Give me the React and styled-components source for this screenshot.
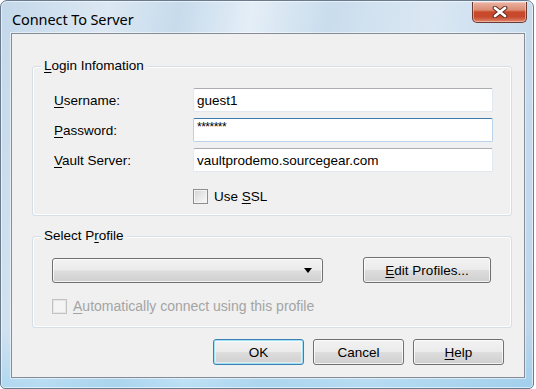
import React from "react";
import styled, { createGlobalStyle, css } from "styled-components";

const GlobalStyle = createGlobalStyle`
  body {
    margin: 0;
    background: #ffffff;
  }
`;

const dialogFont = `"Liberation Sans", Arial, sans-serif`;

const Window = styled.div`
  box-sizing: border-box;
  width: 534px;
  height: 389px;
  display: flex;
  flex-direction: column;
  padding: 0 8px 10px 10px;
  border: 1px solid #6a7b8e;
  border-radius: 7px 7px 5px 5px;
  background:
    linear-gradient(to bottom, rgba(255, 255, 255, 0) 85%, rgba(120, 200, 240, 0.4) 100%),
    linear-gradient(
      100deg,
      #c3d8ea 0%,
      #dce8f3 18%,
      #c7dbec 30%,
      #e4eef7 42%,
      #cadded 55%,
      #dae7f3 72%,
      #c9dcee 88%,
      #bcd4ea 100%
    );
  box-shadow: inset 0 0 0 1px rgba(255, 255, 255, 0.55);
  font-family: ${dialogFont};
`;

const TitleBar = styled.div`
  height: 32px;
  display: flex;
  justify-content: space-between;
  align-items: flex-start;
`;

const Title = styled.div`
  margin-top: 8px;
  padding-left: 1px;
  font-family: "Noto Sans", "Open Sans", sans-serif;
  font-size: 14.5px;
  color: #000;
  letter-spacing: -0.1px;
`;

const CloseButton = styled.div`
  box-sizing: border-box;
  width: 55px;
  height: 21px;
  margin-top: 1px;
  margin-right: -2px;
  display: flex;
  align-items: center;
  justify-content: center;
  border: 1px solid #6b3a30;
  border-top: none;
  border-radius: 0 0 5px 5px;
  background: linear-gradient(
    to bottom,
    #eab4a4 0%,
    #dc8c74 40%,
    #c9482a 50%,
    #c64a2e 75%,
    #e0876c 100%
  );
  box-shadow: inset 0 0 0 1px rgba(255, 220, 210, 0.5);
`;

const Client = styled.div`
  flex: 1;
  display: flex;
  flex-direction: column;
  padding: 32px 12px 0 20px;
  border: 1px solid #858c95;
  background: #f0f0f0;
  box-shadow: 0 0 0 1px rgba(255, 255, 255, 0.5);
`;

const GroupBox = styled.div`
  position: relative;
  box-sizing: border-box;
  border: 1px solid #d5dfe5;
  border-radius: 3px;
  box-shadow: inset 0 0 0 1px #fdfdfd;
  ${(p) => p.$pad && css`padding: ${p.$pad};`}
  ${(p) => p.$mt && css`margin-top: ${p.$mt};`}
`;

const GroupTitle = styled.span`
  position: absolute;
  left: 8px;
  top: -9px;
  padding: 0 3px;
  background: #f0f0f0;
  font-size: 13.5px;
  line-height: 16px;
  color: #000;
`;

const Key = styled.span`
  text-decoration: underline;
  text-underline-offset: 2px;
`;

const FormGrid = styled.div`
  display: grid;
  grid-template-columns: 139px 300px;
  grid-auto-rows: 24px;
  row-gap: 6px;
  align-items: center;
`;

const Label = styled.label`
  font-size: 13.5px;
  color: #000;
`;

const TextBox = styled.input`
  box-sizing: border-box;
  width: 100%;
  height: 24px;
  margin: 0;
  padding: 0 3px;
  font-family: ${dialogFont};
  font-size: 13.5px;
  color: #000;
  background: #fff;
  border: 1px solid #e2e8ee;
  border-top-color: #abadb3;
  border-radius: 2px;
  outline: none;
  ${(p) =>
    p.$focused &&
    css`
      border-color: #b7d2ea;
      border-top-color: #3d7bad;
    `}
  ${(p) =>
    p.$secret &&
    css`
      padding-bottom: 6px;
      font-size: 12px;
      letter-spacing: -0.5px;
    `}
`;

const CheckRow = styled.div`
  display: flex;
  align-items: center;
  gap: 6px;
  ${(p) => p.$mt && css`margin-top: ${p.$mt};`}
  ${(p) => p.$indent && css`padding-left: ${p.$indent};`}
  font-size: ${(p) => (p.$disabled ? "14px" : "13.5px")};
  color: ${(p) => (p.$disabled ? "#a4a4a4" : "#000")};
`;

const CheckBox = styled.span`
  box-sizing: border-box;
  width: 15px;
  height: 15px;
  border: 1px solid ${(p) => (p.$disabled ? "#c2c2c2" : "#8e8f8f")};
  background: ${(p) =>
    p.$disabled
      ? "#f4f4f4"
      : "linear-gradient(135deg, #d2d2d2 0%, #e8e8e8 50%, #fafafa 100%)"};
  box-shadow: inset 0 0 0 1px ${(p) => (p.$disabled ? "#e6e6e6" : "#f4f4f4")};
  flex-shrink: 0;
`;

const ProfileRow = styled.div`
  display: flex;
  align-items: center;
`;

const ComboBox = styled.div`
  box-sizing: border-box;
  width: 271px;
  height: 25px;
  display: flex;
  align-items: center;
  justify-content: flex-end;
  padding-right: 10px;
  border: 1px solid #707070;
  border-radius: 3px;
  background: linear-gradient(to bottom, #f2f2f2 0%, #ebebeb 48%, #dddddd 52%, #cfcfcf 100%);
  box-shadow: inset 0 0 0 1px rgba(255, 255, 255, 0.75);
`;

const buttonFace = css`
  box-sizing: border-box;
  height: 26px;
  display: flex;
  align-items: center;
  justify-content: center;
  font-family: ${dialogFont};
  font-size: 13.5px;
  color: #000;
  border: 1px solid #707070;
  border-radius: 3px;
  background: linear-gradient(to bottom, #f2f2f2 0%, #ebebeb 48%, #dddddd 52%, #cfcfcf 100%);
  box-shadow: inset 0 0 0 1px rgba(255, 255, 255, 0.75);
`;

const Button = styled.div`
  ${buttonFace}
  width: ${(p) => p.$w || "91px"};
  ${(p) => p.$push && css`margin-left: auto;`}
  ${(p) =>
    p.$default &&
    css`
      border-color: #3c7fb1;
      box-shadow: inset 0 0 0 1px #9fe2f8, inset 0 0 0 2px rgba(255, 255, 255, 0.5);
    `}
`;

const ButtonRow = styled.div`
  display: flex;
  justify-content: flex-end;
  gap: 9px;
  margin-top: 11px;
  padding-right: 8px;
`;

const CloseGlyph = () => (
  <svg width="16" height="12" viewBox="0 0 16 12">
    <path d="M3 2 L13 10 M13 2 L3 10" stroke="#5a2a22" strokeWidth="4.6" strokeLinecap="round" />
    <path d="M3 2 L13 10 M13 2 L3 10" stroke="#ffffff" strokeWidth="2.8" strokeLinecap="round" />
  </svg>
);

const DownArrow = () => (
  <svg width="8" height="5" viewBox="0 0 8 5">
    <path d="M0 0 H8 L4 5 Z" fill="#000" />
  </svg>
);

export default function App() {
  return (
    <>
      <GlobalStyle />
      <Window>
        <TitleBar>
          <Title>Connect To Server</Title>
          <CloseButton>
            <CloseGlyph />
          </CloseButton>
        </TitleBar>
        <Client>
          <GroupBox $pad="21px 18px 11px 21px">
            <GroupTitle>
              <Key>L</Key>ogin Infomation
            </GroupTitle>
            <FormGrid>
              <Label>
                <Key>U</Key>sername:
              </Label>
              <TextBox defaultValue="guest1" readOnly />
              <Label>
                <Key>P</Key>assword:
              </Label>
              <TextBox defaultValue="*******" readOnly $focused $secret />
              <Label>
                <Key>V</Key>ault Server:
              </Label>
              <TextBox defaultValue="vaultprodemo.sourcegear.com" readOnly />
            </FormGrid>
            <CheckRow $mt="17px" $indent="139px">
              <CheckBox />
              <span>
                Use <Key>S</Key>SL
              </span>
            </CheckRow>
          </GroupBox>
          <GroupBox $pad="20px 20px 13px 19px" $mt="20px">
            <GroupTitle>
              Select P<Key>r</Key>ofile
            </GroupTitle>
            <ProfileRow>
              <ComboBox>
                <DownArrow />
              </ComboBox>
              <Button $w="128px" $push>
                <span>
                  <Key>E</Key>dit Profiles...
                </span>
              </Button>
            </ProfileRow>
            <CheckRow $mt="15px" $disabled>
              <CheckBox $disabled />
              <span>
                <Key>A</Key>utomatically connect using this profile
              </span>
            </CheckRow>
          </GroupBox>
          <ButtonRow>
            <Button $default>OK</Button>
            <Button>Cancel</Button>
            <Button>
              <span>
                <Key>H</Key>elp
              </span>
            </Button>
          </ButtonRow>
        </Client>
      </Window>
    </>
  );
}
